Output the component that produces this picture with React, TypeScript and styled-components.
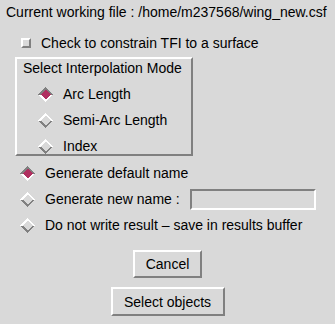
import React from "react";
import styled, { createGlobalStyle } from "styled-components";

const BG = "#d9d9d9";
const DARK = "#808080";
const LIGHT = "#ffffff";
const SELECT = "#b03060";

const Global = createGlobalStyle`
  html, body { margin: 0; padding: 0; background: ${BG}; }
  body { font-family: "Liberation Sans", Arial, sans-serif; font-size: 14px; color: #000; }
`;

const Page = styled.div`
  width: 335px;
  height: 324px;
  background: ${BG};
  display: flex;
  flex-direction: column;
  box-sizing: border-box;
`;

const Header = styled.div`
  height: 24px;
  line-height: 24px;
  padding-left: 6px;
  white-space: nowrap;
`;

const CheckRow = styled.label`
  margin-top: 6px;
  height: 26px;
  display: flex;
  align-items: center;
  padding-left: 21px;
  gap: 10px;
`;

const CheckBox = styled.span`
  width: 10px;
  height: 10px;
  box-sizing: border-box;
  border-top: 2px solid ${LIGHT};
  border-left: 2px solid ${LIGHT};
  border-bottom: 2px solid ${DARK};
  border-right: 2px solid ${DARK};
  background: ${BG};
`;

const Frame = styled.div`
  margin-top: 1px;
  margin-left: 15px;
  width: 178px;
  height: 99px;
  box-sizing: border-box;
  border-top: 2px solid ${LIGHT};
  border-left: 2px solid ${LIGHT};
  border-bottom: 2px solid ${DARK};
  border-right: 2px solid ${DARK};
  display: flex;
  flex-direction: column;
`;

const FrameTitle = styled.div`
  height: 18px;
  line-height: 18px;
  padding-left: 6px;
  white-space: nowrap;
`;

const RadioList = styled.div<{ $top: number; $left: number }>`
  margin-top: ${(p) => p.$top}px;
  padding-left: ${(p) => p.$left}px;
  display: flex;
  flex-direction: column;
  gap: 6px;
`;

const RadioRow = styled.div`
  height: 20px;
  display: flex;
  align-items: center;
  gap: 10px;
  white-space: nowrap;
`;

const TextField = styled.div`
  margin-left: 0px;
  width: 126px;
  height: 21px;
  box-sizing: border-box;
  border-top: 2px solid ${DARK};
  border-left: 2px solid ${DARK};
  border-bottom: 2px solid ${LIGHT};
  border-right: 2px solid ${LIGHT};
  background: ${BG};
`;

const ButtonColumn = styled.div`
  margin-top: 15px;
  display: flex;
  flex-direction: column;
  align-items: center;
  gap: 9px;
`;

const Button = styled.button<{ $w: number; $h: number }>`
  width: ${(p) => p.$w}px;
  height: ${(p) => p.$h}px;
  box-sizing: border-box;
  padding: 0;
  margin: 0;
  background: ${BG};
  font-family: "Liberation Sans", Arial, sans-serif;
  font-size: 14px;
  color: #000;
  border-top: 2px solid ${LIGHT};
  border-left: 2px solid ${LIGHT};
  border-bottom: 2px solid ${DARK};
  border-right: 2px solid ${DARK};
  border-radius: 0;
  outline: none;
`;

const Diamond: React.FC<{ on?: boolean }> = ({ on }) => {
  const top = on ? DARK : LIGHT;
  const bottom = on ? LIGHT : DARK;
  return (
    <svg width="15" height="15" viewBox="0 0 15 15" shapeRendering="crispEdges" style={{ flex: "none" }}>
      <polygon points="0,7.5 7.5,0 15,7.5" fill={top} />
      <polygon points="0,7.5 7.5,15 15,7.5" fill={bottom} />
      <polygon points="2.5,7.5 7.5,2.5 12.5,7.5 7.5,12.5" fill={on ? SELECT : BG} />
    </svg>
  );
};

export default function App() {
  return (
    <>
      <Global />
      <Page>
        <Header>Current working file : /home/m237568/wing_new.csf</Header>
        <CheckRow>
          <CheckBox />
          <span>Check to constrain TFI to a surface</span>
        </CheckRow>
        <Frame>
          <FrameTitle>Select Interpolation Mode</FrameTitle>
          <RadioList $top={7} $left={21}>
            <RadioRow><Diamond on /><span>Arc Length</span></RadioRow>
            <RadioRow><Diamond /><span>Semi-Arc Length</span></RadioRow>
            <RadioRow><Diamond /><span>Index</span></RadioRow>
          </RadioList>
        </Frame>
        <RadioList $top={7} $left={20}>
          <RadioRow><Diamond on /><span>Generate default name</span></RadioRow>
          <RadioRow>
            <Diamond />
            <span>Generate new name :</span>
            <TextField />
          </RadioRow>
          <RadioRow><Diamond /><span>Do not write result – save in results buffer</span></RadioRow>
        </RadioList>
        <ButtonColumn>
          <Button $w={69} $h={28}>Cancel</Button>
          <Button $w={114} $h={29}>Select objects</Button>
        </ButtonColumn>
      </Page>
    </>
  );
}
